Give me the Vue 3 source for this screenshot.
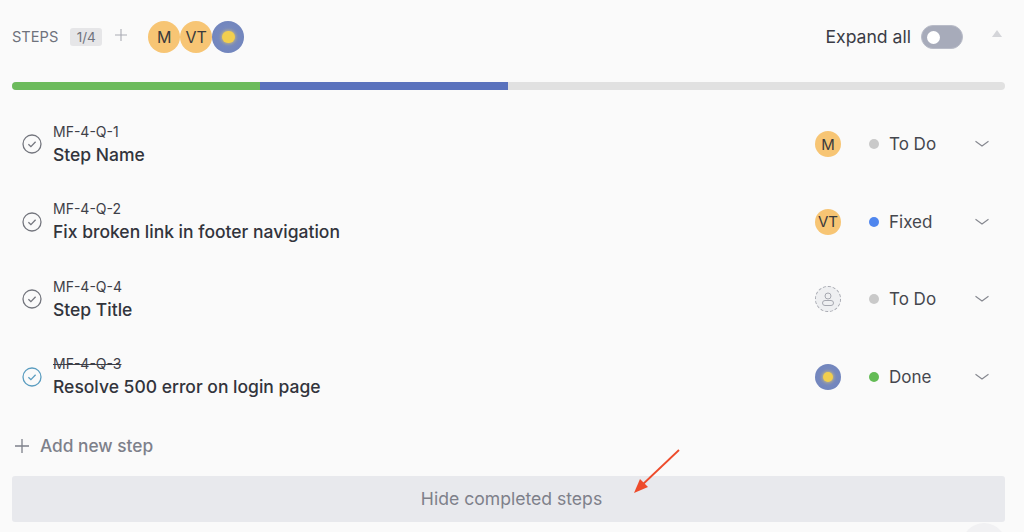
<script setup>
const steps = [
  { id: 'MF-4-Q-1', title: 'Step Name', avatar: 'M', dot: '#c9c9c9', status: 'To Do' },
  { id: 'MF-4-Q-2', title: 'Fix broken link in footer navigation', avatar: 'VT', dot: '#4f86ee', status: 'Fixed' },
  { id: 'MF-4-Q-4', title: 'Step Title', avatar: '', dot: '#c9c9c9', status: 'To Do' },
  { id: 'MF-4-Q-3', title: 'Resolve 500 error on login page', avatar: 'img', dot: '#63bb55', status: 'Done', done: true },
]
</script>

<template>
  <div class="page">
    <header class="head">
      <span class="label">STEPS</span>
      <span class="count">1/4</span>
      <svg class="head-plus" width="14" height="14" viewBox="0 0 14 14"><path d="M7 1v12M1 7h12" stroke="#a9abb3" stroke-width="1.1" fill="none" /></svg>
      <div class="stack">
        <span class="av big">M</span>
        <span class="av big">VT</span>
        <span class="av big photo"><i></i></span>
      </div>
      <span class="expand">Expand all</span>
      <span class="toggle"><i></i></span>
      <span class="caret"></span>
    </header>

    <div class="progress">
      <span class="seg green"></span>
      <span class="seg blue"></span>
    </div>

    <ul class="list">
      <li v-for="s in steps" :key="s.id" class="row">
        <svg class="check" width="20" height="20" viewBox="0 0 20 20" :class="{ on: s.done }">
          <circle cx="10" cy="10" r="9" fill="none" stroke="currentColor" stroke-width="1.3" />
          <path d="M6.4 10.2l2.5 2.4 4.7-4.8" fill="none" stroke="currentColor" stroke-width="1.3" />
        </svg>
        <div class="text">
          <div class="id" :class="{ struck: s.done }">{{ s.id }}</div>
          <div class="title">{{ s.title }}</div>
        </div>
        <span v-if="s.avatar === 'img'" class="av small photo"><i></i></span>
        <span v-else-if="s.avatar" class="av small">{{ s.avatar }}</span>
        <span v-else class="av small none">
          <svg width="16" height="16" viewBox="0 0 16 16" fill="none" stroke="#a6a8b0" stroke-width="1">
            <circle cx="8" cy="5" r="3" />
            <rect x="2.5" y="9.5" width="11" height="5" rx="2.5" />
          </svg>
        </span>
        <span class="dot" :style="{ background: s.dot }"></span>
        <span class="status">{{ s.status }}</span>
        <svg class="chev" width="16" height="8" viewBox="0 0 16 8"><path d="M1.5 1.2L8 6l6.5-4.8" fill="none" stroke="#85878f" stroke-width="1.1" /></svg>
      </li>
    </ul>

    <div class="add">
      <svg width="16" height="16" viewBox="0 0 16 16"><path d="M8 1v14M1 8h14" stroke="#7d808a" stroke-width="1.3" fill="none" /></svg>
      <span>Add new step</span>
    </div>

    <button class="hide">Hide completed steps</button>

    <svg class="arrow" width="60" height="56" viewBox="0 0 60 56">
      <path d="M54 2L16 38" stroke="#ee4b2b" stroke-width="1.8" fill="none" />
      <path d="M9 45l6-14 8 8z" fill="#ee4b2b" />
    </svg>
    <span class="corner"></span>
  </div>
</template>

<style>
html, body { margin: 0; background: #fafafa; }
</style>

<style scoped>
.page {
  position: relative;
  width: 1024px;
  height: 532px;
  overflow: hidden;
  box-sizing: border-box;
  padding: 0 19px 0 12px;
  background: #fafafa;
  font-family: Inter, "Liberation Sans", sans-serif;
  color: #32343c;
}
.head {
  display: flex;
  align-items: center;
  height: 74px;
}
.label { font-size: 14.6px; color: #6f727c; }
.count {
  margin-left: 12px;
  width: 32px;
  height: 18px;
  line-height: 18px;
  text-align: center;
  font-size: 13.5px;
  color: #6f727c;
  background: #e6e6e8;
  border-radius: 3px;
}
.head-plus { margin-left: 12px; margin-top: -4px; }
.stack { display: flex; margin-left: 20px; }
.av {
  display: flex;
  align-items: center;
  justify-content: center;
  border-radius: 50%;
  background: #f7c574;
  color: #3a3a3c;
  flex: none;
}
.av.big { width: 32px; height: 32px; font-size: 16px; }
.av.small { width: 26px; height: 26px; font-size: 15px; margin-left: auto; }
.photo { background: radial-gradient(circle, #7d8ebf 0, #6d82bd 100%); }
.photo i {
  display: block;
  width: 40%;
  height: 40%;
  border-radius: 50%;
  background: #f2cf4e;
  box-shadow: 0 0 3px 1px rgba(240, 205, 90, .55);
}
.none { background: #eeeff1; border: 1px dashed #a6a8b0; box-sizing: border-box; }
.expand { margin-left: auto; margin-top: -2px; font-size: 17.6px; color: #3a3c45; }
.toggle {
  display: flex;
  align-items: center;
  margin-left: 10px;
  width: 42px;
  height: 24px;
  box-sizing: border-box;
  padding-left: 5px;
  border-radius: 12px;
  background: #a7abba;
  border: 1px solid #b9bcc8;
}
.toggle i { display: block; width: 13px; height: 13px; border-radius: 50%; background: #fff; }
.caret {
  margin: -8px 3px 0 29px;
  width: 0;
  height: 0;
  border-left: 5.5px solid transparent;
  border-right: 5.5px solid transparent;
  border-bottom: 7px solid #d4d5d9;
}
.progress {
  display: flex;
  height: 8px;
  margin-top: 8px;
  border-radius: 4px;
  overflow: hidden;
  background: #e1e1e1;
}
.seg { width: 248px; }
.green { background: #6cbb5c; }
.blue { background: #5a72bd; }
.list { list-style: none; margin: 15.5px 0 0; padding: 0; }
.row {
  display: flex;
  align-items: center;
  height: 77.5px;
  padding-left: 10px;
}
.check { color: #74767e; flex: none; }
.check.on { color: #5b9dc0; }
.text { margin-left: 11px; }
.id { font-size: 14px; line-height: 20px; padding-top: 1px; color: #3e4048; }
.struck { text-decoration: line-through; }
.title { font-size: 17.5px; line-height: 26px; font-weight: 500; color: #32343c; }
.dot { width: 10px; height: 10px; border-radius: 50%; margin-left: 28px; flex: none; }
.status { width: 85px; margin-left: 10px; font-size: 17px; color: #45474e; }
.chev { margin-right: 15px; flex: none; }
.add {
  display: flex;
  align-items: center;
  gap: 10px;
  margin-top: 12px;
  padding-left: 2px;
  height: 36px;
  font-size: 17.3px;
  font-weight: 500;
  color: #7d808a;
}
.hide {
  display: block;
  width: 100%;
  height: 46px;
  margin-top: 12px;
  padding: 0 0 0 6px;
  border: 0;
  border-radius: 3px;
  background: #e8e9ed;
  font: 400 17.6px Inter, "Liberation Sans", sans-serif;
  color: #7e808a;
}
.arrow { position: absolute; left: 625px; top: 448px; }
.corner {
  position: absolute;
  left: 962px;
  top: 523px;
  width: 44px;
  height: 44px;
  border-radius: 50%;
  background: #f1f1f3;
}
</style>
